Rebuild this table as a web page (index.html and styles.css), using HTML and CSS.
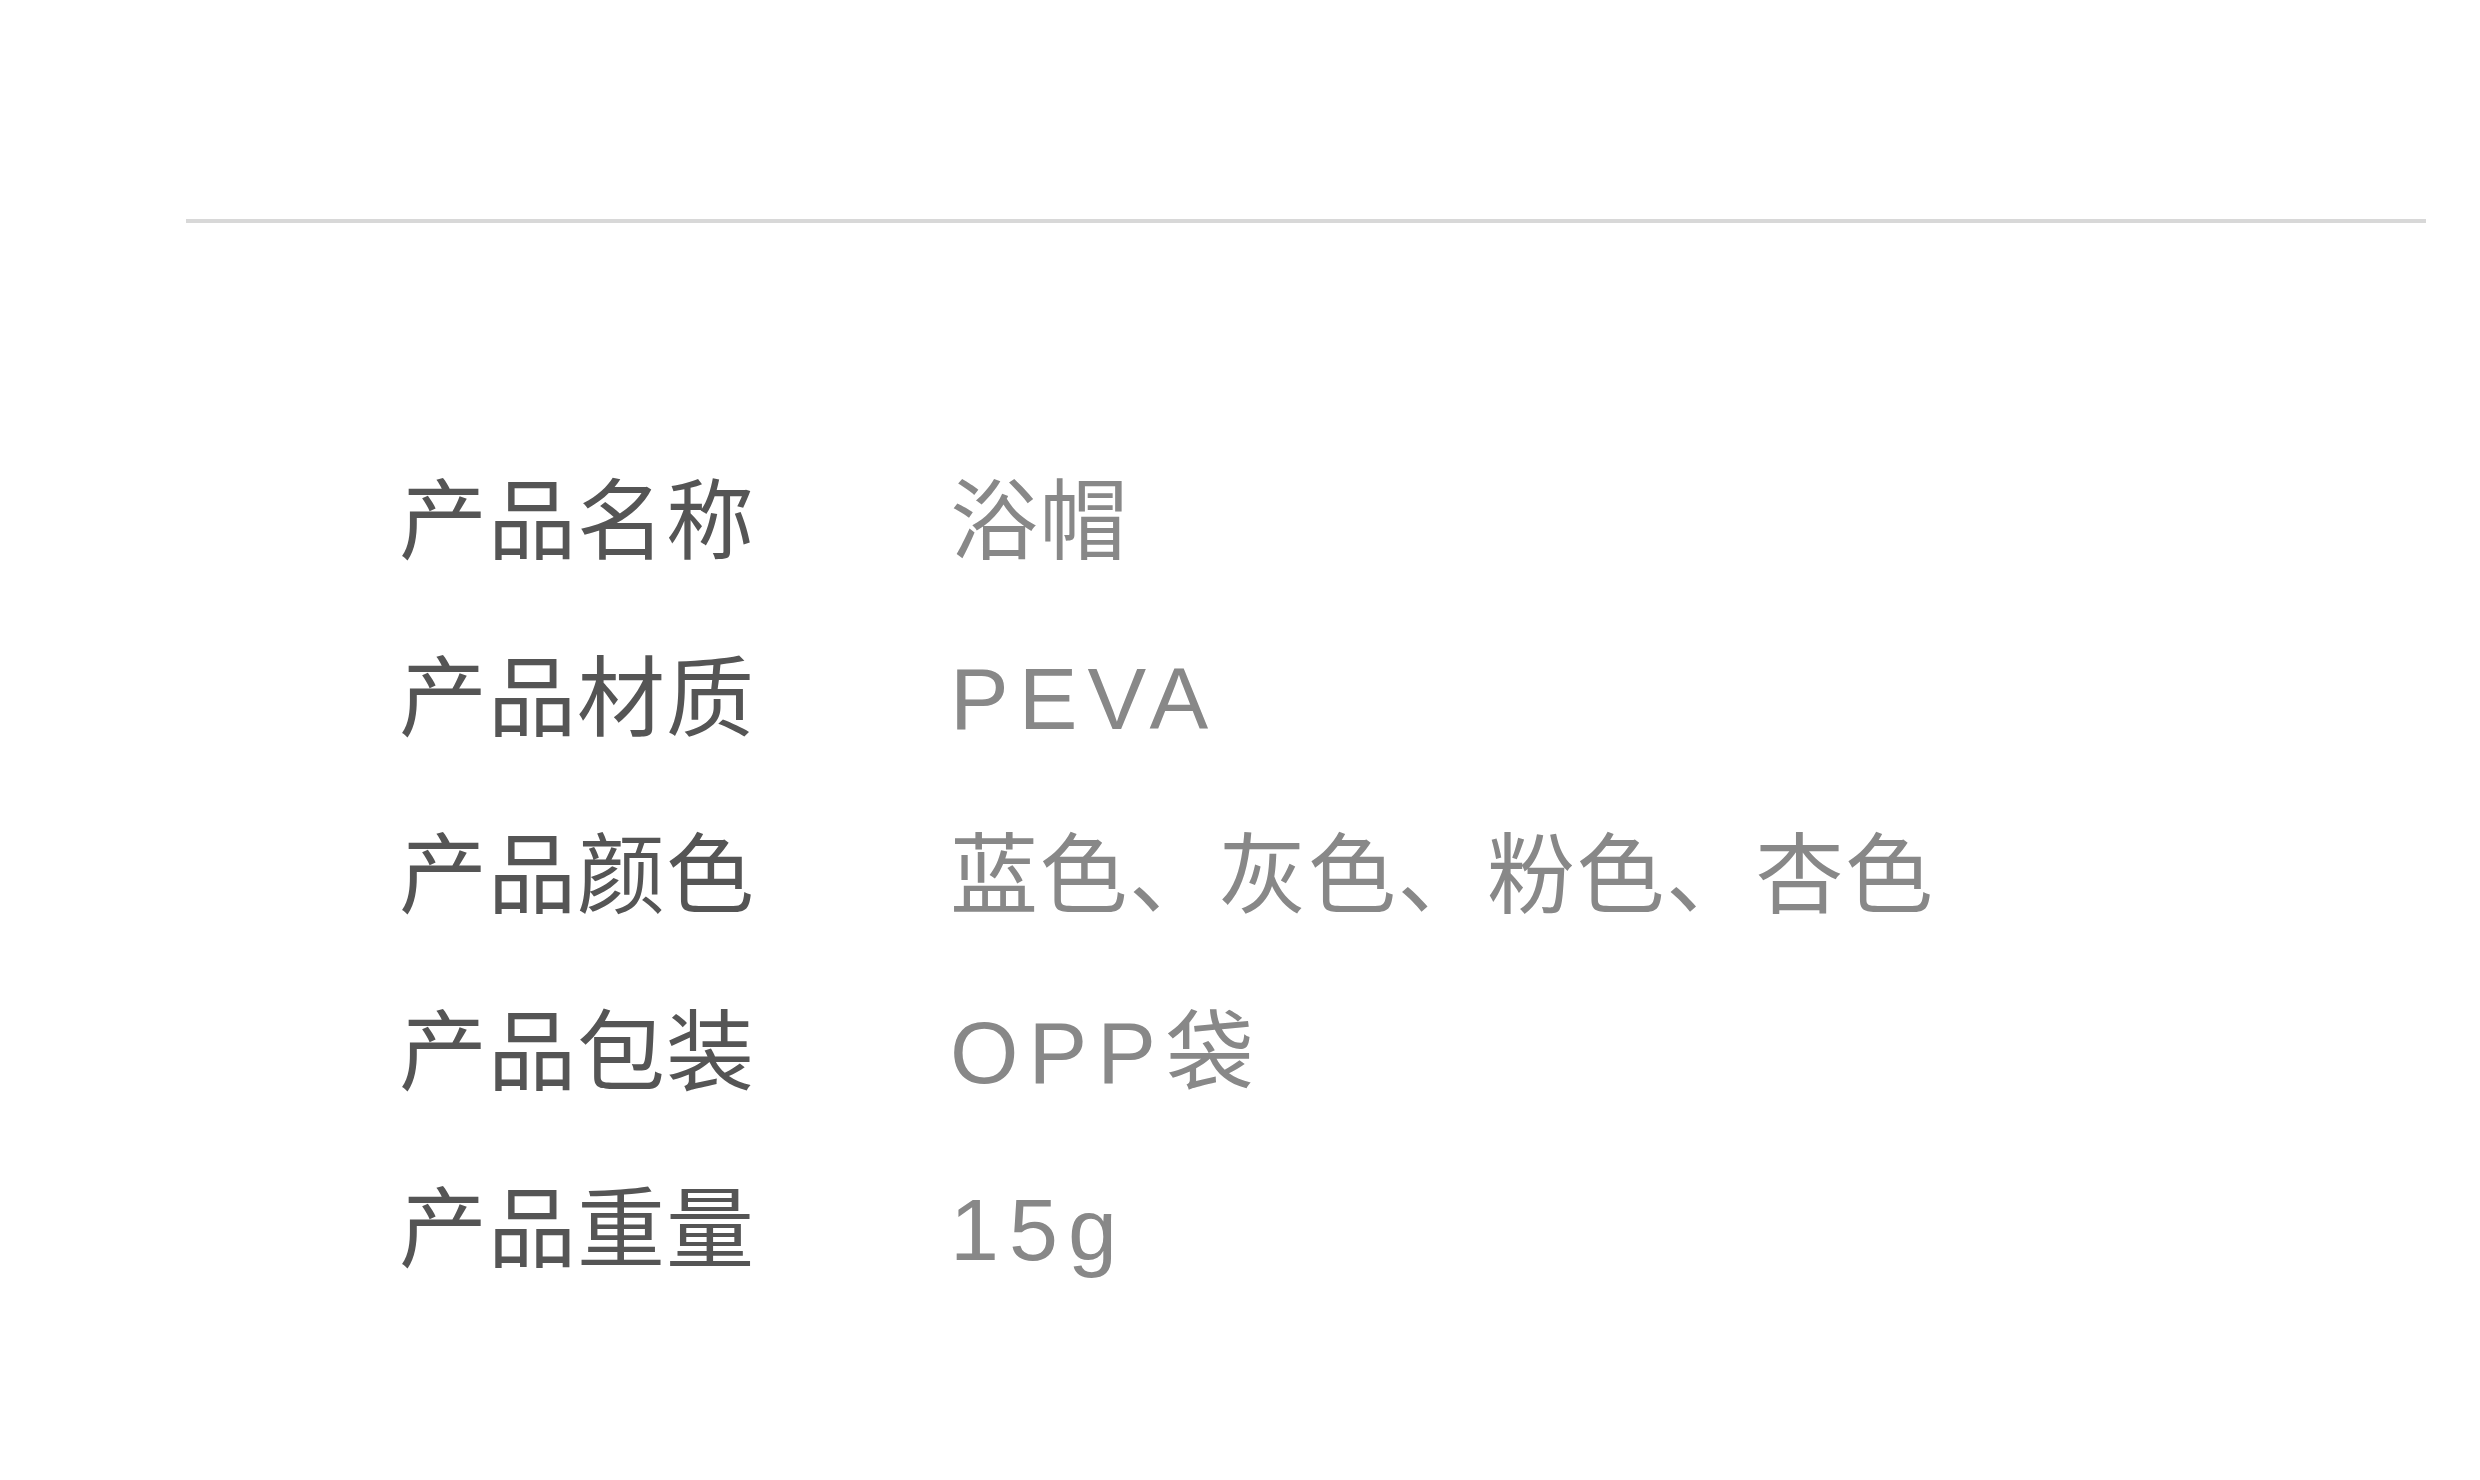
FILE: index.html
```html
<!DOCTYPE html>
<html lang="zh-CN">
<head>
    <meta charset="UTF-8">
    <meta name="viewport" content="width=device-width, initial-scale=1.0">
    <title>产品参数</title>
    <link rel="stylesheet" href="styles.css">
</head>
<body>
    <div class="page">
        <hr class="divider">

        <!-- 产品参数 -->
        <dl class="specs">
            <dt>产品名称</dt>
            <dd>浴帽</dd>
            <dt>产品材质</dt>
            <dd><span class="latin">PEVA</span></dd>
            <dt>产品颜色</dt>
            <dd>蓝色、灰色、粉色、杏色</dd>
            <dt>产品包装</dt>
            <dd><span class="latin">OPP</span>袋</dd>
            <dt>产品重量</dt>
            <dd><span class="latin">15g</span></dd>
        </dl>
    </div>
</body>
</html>
```

FILE: styles.css
```css
body {
    margin: 0;
    padding: 0;
    background-color: #ffffff;
    font-family: "Noto Sans CJK SC", sans-serif;
}
.page {
    width: 2480px;
    height: 1480px;
    padding-top: 219px;
    box-sizing: border-box;
}
.divider {
    margin: 0 0 0 186px;
    width: 2240px;
    height: 4px;
    border: none;
    background-color: #d8d8d8;
}
.specs {
    display: grid;
    grid-template-columns: 551px 1fr;
    grid-auto-rows: 177px;
    margin: 202px 0 0 0;
    padding-left: 399px;
    font-size: 88px;
    line-height: 177px;
}
.specs dt {
    color: #555555;
    letter-spacing: 1px;
}
.specs dd {
    margin: 0;
    color: #888888;
    letter-spacing: 1.5px;
}
.latin {
    font-family: "Liberation Sans", "Noto Sans CJK SC", sans-serif;
    letter-spacing: 10px;
}
```
